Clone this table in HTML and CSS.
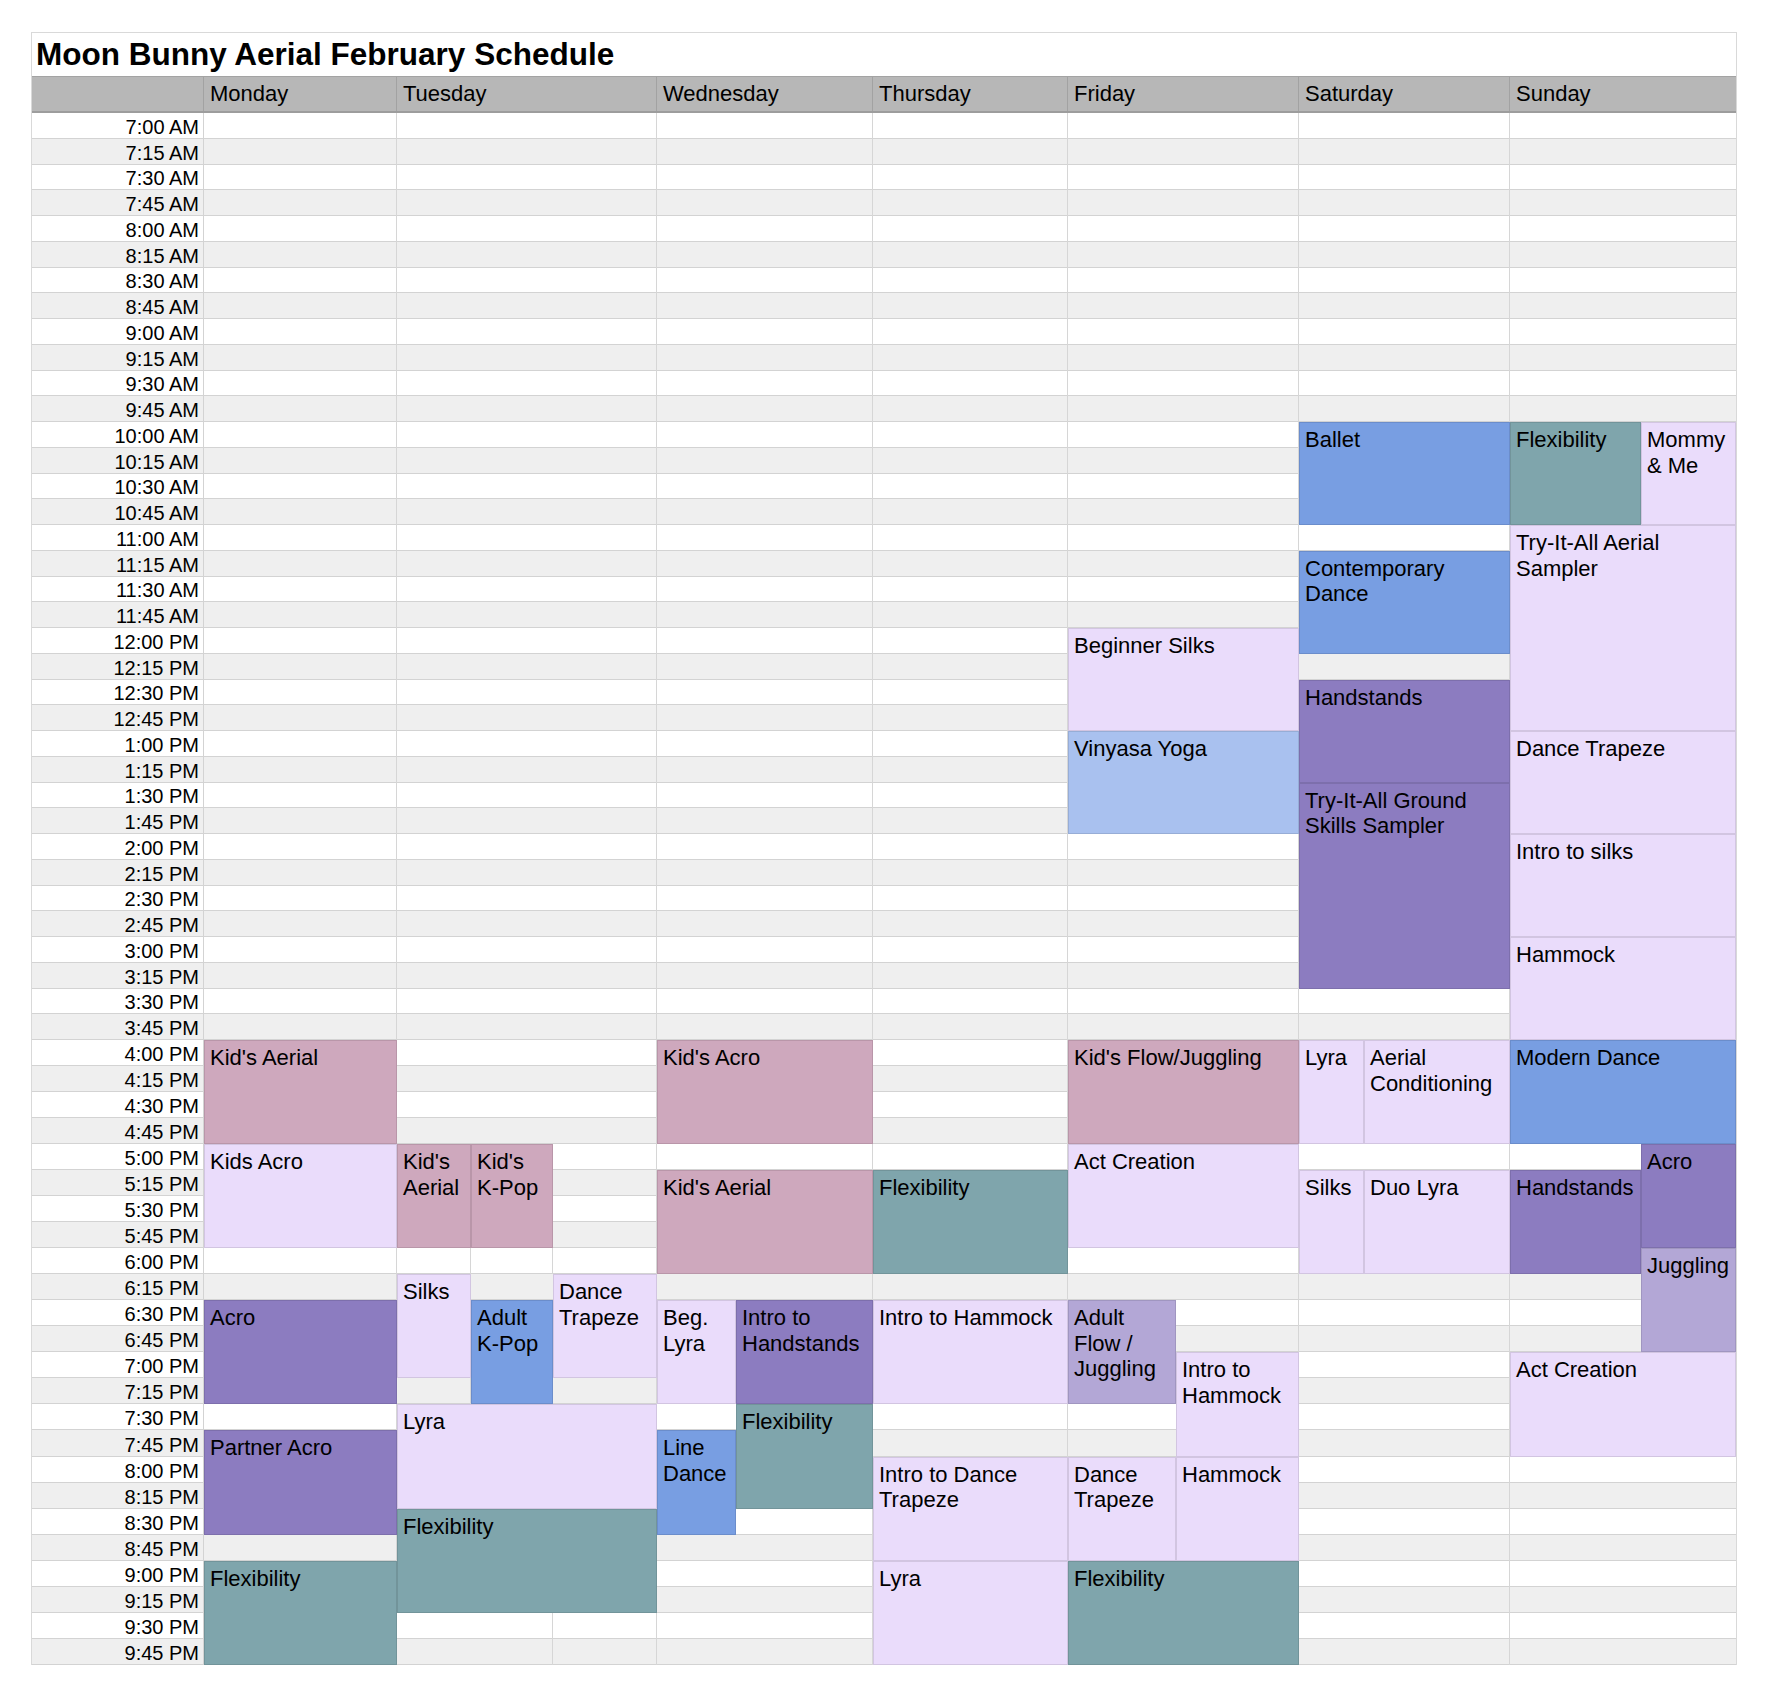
FILE: index.html
```html
<!DOCTYPE html>
<html lang="en">
<head>
<meta charset="utf-8">
<title>Moon Bunny Aerial February Schedule</title>
<link rel="stylesheet" href="styles.css">
</head>
<body>
<div class="page">
  <div class="sheet">
    <div class="title">Moon Bunny Aerial February Schedule</div>
    <div class="head cols">
      <div></div>
      <div>Monday</div>
      <div class="span3">Tuesday</div>
      <div class="span2">Wednesday</div>
      <div>Thursday</div>
      <div class="span2">Friday</div>
      <div class="span2">Saturday</div>
      <div class="span2">Sunday</div>
    </div>
    <div class="body">
      <div class="rows">
        <div class="row"><span class="t">7:00 AM</span></div>
        <div class="row"><span class="t">7:15 AM</span></div>
        <div class="row"><span class="t">7:30 AM</span></div>
        <div class="row"><span class="t">7:45 AM</span></div>
        <div class="row"><span class="t">8:00 AM</span></div>
        <div class="row"><span class="t">8:15 AM</span></div>
        <div class="row"><span class="t">8:30 AM</span></div>
        <div class="row"><span class="t">8:45 AM</span></div>
        <div class="row"><span class="t">9:00 AM</span></div>
        <div class="row"><span class="t">9:15 AM</span></div>
        <div class="row"><span class="t">9:30 AM</span></div>
        <div class="row"><span class="t">9:45 AM</span></div>
        <div class="row"><span class="t">10:00 AM</span></div>
        <div class="row"><span class="t">10:15 AM</span></div>
        <div class="row"><span class="t">10:30 AM</span></div>
        <div class="row"><span class="t">10:45 AM</span></div>
        <div class="row"><span class="t">11:00 AM</span></div>
        <div class="row"><span class="t">11:15 AM</span></div>
        <div class="row"><span class="t">11:30 AM</span></div>
        <div class="row"><span class="t">11:45 AM</span></div>
        <div class="row"><span class="t">12:00 PM</span></div>
        <div class="row"><span class="t">12:15 PM</span></div>
        <div class="row"><span class="t">12:30 PM</span></div>
        <div class="row"><span class="t">12:45 PM</span></div>
        <div class="row"><span class="t">1:00 PM</span></div>
        <div class="row"><span class="t">1:15 PM</span></div>
        <div class="row"><span class="t">1:30 PM</span></div>
        <div class="row"><span class="t">1:45 PM</span></div>
        <div class="row"><span class="t">2:00 PM</span></div>
        <div class="row"><span class="t">2:15 PM</span></div>
        <div class="row"><span class="t">2:30 PM</span></div>
        <div class="row"><span class="t">2:45 PM</span></div>
        <div class="row"><span class="t">3:00 PM</span></div>
        <div class="row"><span class="t">3:15 PM</span></div>
        <div class="row"><span class="t">3:30 PM</span></div>
        <div class="row"><span class="t">3:45 PM</span></div>
        <div class="row"><span class="t">4:00 PM</span></div>
        <div class="row"><span class="t">4:15 PM</span></div>
        <div class="row"><span class="t">4:30 PM</span></div>
        <div class="row"><span class="t">4:45 PM</span></div>
        <div class="row"><span class="t">5:00 PM</span></div>
        <div class="row"><span class="t">5:15 PM</span></div>
        <div class="row"><span class="t">5:30 PM</span></div>
        <div class="row"><span class="t">5:45 PM</span></div>
        <div class="row"><span class="t">6:00 PM</span></div>
        <div class="row"><span class="t">6:15 PM</span></div>
        <div class="row"><span class="t">6:30 PM</span></div>
        <div class="row"><span class="t">6:45 PM</span></div>
        <div class="row"><span class="t">7:00 PM</span></div>
        <div class="row"><span class="t">7:15 PM</span></div>
        <div class="row"><span class="t">7:30 PM</span></div>
        <div class="row"><span class="t">7:45 PM</span></div>
        <div class="row"><span class="t">8:00 PM</span></div>
        <div class="row"><span class="t">8:15 PM</span></div>
        <div class="row"><span class="t">8:30 PM</span></div>
        <div class="row"><span class="t">8:45 PM</span></div>
        <div class="row"><span class="t">9:00 PM</span></div>
        <div class="row"><span class="t">9:15 PM</span></div>
        <div class="row"><span class="t">9:30 PM</span></div>
        <div class="row"><span class="t">9:45 PM</span></div>
      </div>
      <div class="events cols">
        <div class="day d-mon"></div>
        <div class="day d-tue"></div>
        <div class="day d-wed"></div>
        <div class="day d-thu"></div>
        <div class="day d-fri"></div>
        <div class="day d-sat"></div>
        <div class="sub sub-a1"></div>
        <div class="sub sub-b1"></div>
        <div class="sub sub-a2"></div>
        <div class="sub sub-ab3"></div>

        <!-- Monday -->
        <div class="ev mauve" style="grid-area: 37 / 2 / span 4 / span 1">Kid's Aerial</div>
        <div class="ev lav" style="grid-area: 41 / 2 / span 4 / span 1">Kids Acro</div>
        <div class="ev purple" style="grid-area: 47 / 2 / span 4 / span 1">Acro</div>
        <div class="ev purple" style="grid-area: 52 / 2 / span 4 / span 1">Partner Acro</div>
        <div class="ev teal" style="grid-area: 57 / 2 / span 4 / span 1">Flexibility</div>

        <!-- Tuesday -->
        <div class="ev mauve" style="grid-area: 41 / 3 / span 4 / span 1">Kid's Aerial</div>
        <div class="ev mauve" style="grid-area: 41 / 4 / span 4 / span 1">Kid's K-Pop</div>
        <div class="ev lav" style="grid-area: 46 / 3 / span 4 / span 1">Silks</div>
        <div class="ev blue" style="grid-area: 47 / 4 / span 4 / span 1">Adult K-Pop</div>
        <div class="ev lav" style="grid-area: 46 / 5 / span 4 / span 1">Dance Trapeze</div>
        <div class="ev lav" style="grid-area: 51 / 3 / span 4 / span 3">Lyra</div>
        <div class="ev teal" style="grid-area: 55 / 3 / span 4 / span 3">Flexibility</div>

        <!-- Wednesday -->
        <div class="ev mauve" style="grid-area: 37 / 6 / span 4 / span 2">Kid's Acro</div>
        <div class="ev mauve" style="grid-area: 42 / 6 / span 4 / span 2">Kid's Aerial</div>
        <div class="ev lav" style="grid-area: 47 / 6 / span 4 / span 1">Beg. Lyra</div>
        <div class="ev purple" style="grid-area: 47 / 7 / span 4 / span 1">Intro to Handstands</div>
        <div class="ev teal" style="grid-area: 51 / 7 / span 4 / span 1">Flexibility</div>
        <div class="ev blue" style="grid-area: 52 / 6 / span 4 / span 1">Line Dance</div>

        <!-- Thursday -->
        <div class="ev teal" style="grid-area: 42 / 8 / span 4 / span 1">Flexibility</div>
        <div class="ev lav" style="grid-area: 47 / 8 / span 4 / span 1">Intro to Hammock</div>
        <div class="ev lav" style="grid-area: 53 / 8 / span 4 / span 1">Intro to Dance Trapeze</div>
        <div class="ev lav" style="grid-area: 57 / 8 / span 4 / span 1">Lyra</div>

        <!-- Friday -->
        <div class="ev lav" style="grid-area: 21 / 9 / span 4 / span 2">Beginner Silks</div>
        <div class="ev lblue" style="grid-area: 25 / 9 / span 4 / span 2">Vinyasa Yoga</div>
        <div class="ev mauve" style="grid-area: 37 / 9 / span 4 / span 2">Kid's Flow/Juggling</div>
        <div class="ev lav" style="grid-area: 41 / 9 / span 4 / span 2">Act Creation</div>
        <div class="ev lilac" style="grid-area: 47 / 9 / span 4 / span 1">Adult Flow / Juggling</div>
        <div class="ev lav" style="grid-area: 49 / 10 / span 4 / span 1">Intro to Hammock</div>
        <div class="ev lav" style="grid-area: 53 / 9 / span 4 / span 1">Dance Trapeze</div>
        <div class="ev lav" style="grid-area: 53 / 10 / span 4 / span 1">Hammock</div>
        <div class="ev teal" style="grid-area: 57 / 9 / span 4 / span 2">Flexibility</div>

        <!-- Saturday -->
        <div class="ev blue" style="grid-area: 13 / 11 / span 4 / span 2">Ballet</div>
        <div class="ev blue" style="grid-area: 18 / 11 / span 4 / span 2">Contemporary Dance</div>
        <div class="ev purple" style="grid-area: 23 / 11 / span 4 / span 2">Handstands</div>
        <div class="ev purple" style="grid-area: 27 / 11 / span 8 / span 2">Try-It-All Ground Skills Sampler</div>
        <div class="ev lav" style="grid-area: 37 / 11 / span 4 / span 1">Lyra</div>
        <div class="ev lav" style="grid-area: 37 / 12 / span 4 / span 1">Aerial Conditioning</div>
        <div class="ev lav" style="grid-area: 42 / 11 / span 4 / span 1">Silks</div>
        <div class="ev lav" style="grid-area: 42 / 12 / span 4 / span 1">Duo Lyra</div>

        <!-- Sunday -->
        <div class="ev teal" style="grid-area: 13 / 13 / span 4 / span 1">Flexibility</div>
        <div class="ev lav" style="grid-area: 13 / 14 / span 4 / span 1">Mommy &amp; Me</div>
        <div class="ev lav" style="grid-area: 17 / 13 / span 8 / span 2">Try-It-All Aerial Sampler</div>
        <div class="ev lav" style="grid-area: 25 / 13 / span 4 / span 2">Dance Trapeze</div>
        <div class="ev lav" style="grid-area: 29 / 13 / span 4 / span 2">Intro to silks</div>
        <div class="ev lav" style="grid-area: 33 / 13 / span 4 / span 2">Hammock</div>
        <div class="ev blue" style="grid-area: 37 / 13 / span 4 / span 2">Modern Dance</div>
        <div class="ev purple" style="grid-area: 41 / 14 / span 4 / span 1">Acro</div>
        <div class="ev purple" style="grid-area: 42 / 13 / span 4 / span 1">Handstands</div>
        <div class="ev lilac" style="grid-area: 45 / 14 / span 4 / span 1">Juggling</div>
        <div class="ev lav" style="grid-area: 49 / 13 / span 4 / span 2">Act Creation</div>
      </div>
    </div>
  </div>
</div>
</body>
</html>
```
FILE: styles.css
```css
* {
  box-sizing: border-box;
}

body {
  margin: 0;
  background: #ffffff;
  color: #000000;
  font-family: "Liberation Sans", Arial, Helvetica, sans-serif;
}

.page {
  padding: 32px 0 0 31px;
}

.sheet {
  width: 1706px;
  border: 1px solid #d9d9d9;
  border-bottom: 0;
}

.title {
  height: 43px;
  line-height: 43px;
  padding-left: 4px;
  font-size: 31.5px;
  font-weight: bold;
  white-space: nowrap;
}

.cols {
  display: grid;
  grid-template-columns: 172px 193px 74px 82px 104px 79px 137px 195px 108px 123px 65px 146px 131px 95px;
}

.head {
  height: 37px;
  background: #b7b7b7;
  border-top: 1px solid #a3a3a3;
  border-bottom: 2px solid #9d9d9d;
}

.head > div {
  display: flex;
  align-items: center;
  padding-left: 6px;
  font-size: 22px;
  border-right: 1px solid #a2a2a2;
}

.head > div:last-child {
  border-right: 0;
}

.span2 {
  grid-column: span 2;
}

.span3 {
  grid-column: span 3;
}

.body {
  display: grid;
}

.rows,
.events {
  grid-area: 1 / 1;
}

.rows,
.events {
  grid-template-rows: repeat(36, 25.76px) repeat(24, 26.04px);
}

.rows {
  display: grid;
}

.row {
  display: grid;
  grid-template-columns: 172px 1fr;
  background: #ffffff;
  border-bottom: 1px solid #d3d3d3;
}

.row:nth-child(even) {
  background: #efefef;
}

.t {
  display: flex;
  align-items: flex-end;
  justify-content: flex-end;
  padding-right: 4px;
  padding-bottom: 1px;
  font-size: 20px;
  line-height: 20px;
  white-space: nowrap;
  border-right: 1px solid #d3d3d3;
}

.day {
  grid-row: 1 / -1;
  border-right: 1px solid #d6d6d6;
}

.d-mon { grid-column: 2 / 3; }
.d-tue { grid-column: 3 / 6; }
.d-wed { grid-column: 6 / 8; }
.d-thu { grid-column: 8 / 9; }
.d-fri { grid-column: 9 / 11; }
.d-sat { grid-column: 11 / 13; }

.sub {
  border-right: 1px solid #d6d6d6;
}

.sub-a1 { grid-row: 45 / 46; grid-column: 3 / 4; }
.sub-b1 { grid-row: 45 / 46; grid-column: 4 / 5; }
.sub-a2 { grid-row: 50 / 51; grid-column: 3 / 4; }
.sub-ab3 { grid-row: 59 / 61; grid-column: 3 / 5; }

.ev {
  padding: 4px 3px 0 5px;
  font-size: 22px;
  line-height: 25.5px;
  overflow: hidden;
  border: 1px solid rgba(0, 0, 0, 0.1);
}

.lav { background: #eadcfb; }
.mauve { background: #cea8bd; }
.purple { background: #8c7cc0; }
.lilac { background: #b3a7d6; }
.blue { background: #789ee2; }
.lblue { background: #a9c1ef; }
.teal { background: #7fa5ac; }
```
